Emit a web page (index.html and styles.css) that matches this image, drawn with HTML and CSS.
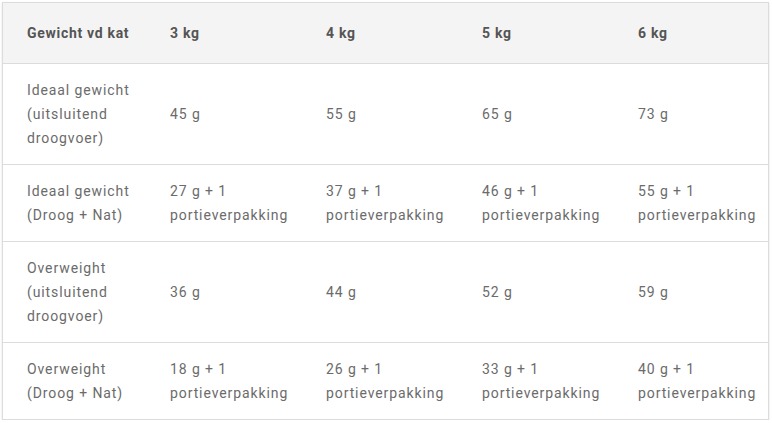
FILE: index.html
```html
<!DOCTYPE html>
<html lang="nl">
<head>
<meta charset="utf-8">
<link rel="stylesheet" href="styles.css">
</head>
<body>
<div class="wrap">
<table class="feed">
<colgroup><col class="c1"><col class="c2"><col class="c2"><col class="c2"><col></colgroup>
<thead>
<tr><th>Gewicht vd kat</th><th>3 kg</th><th>4 kg</th><th>5 kg</th><th>6 kg</th></tr>
</thead>
<tbody>
<tr><td>Ideaal gewicht<br>(uitsluitend<br>droogvoer)</td><td>45 g</td><td>55 g</td><td>65 g</td><td>73 g</td></tr>
<tr><td>Ideaal gewicht<br>(Droog + Nat)</td><td>27 g + 1<br>portieverpakking</td><td>37 g + 1<br>portieverpakking</td><td>46 g + 1<br>portieverpakking</td><td>55 g + 1<br>portieverpakking</td></tr>
<tr><td>Overweight<br>(uitsluitend<br>droogvoer)</td><td>36 g</td><td>44 g</td><td>52 g</td><td>59 g</td></tr>
<tr><td>Overweight<br>(Droog + Nat)</td><td>18 g + 1<br>portieverpakking</td><td>26 g + 1<br>portieverpakking</td><td>33 g + 1<br>portieverpakking</td><td>40 g + 1<br>portieverpakking</td></tr>
</tbody>
</table>
</div>
</body>
</html>
```
FILE: styles.css
```css
html, body { margin: 0; padding: 0; background: #fff; }
body { padding: 2px 0 0 2px; font-family: Roboto, "Noto Sans", sans-serif; }
.wrap {
  width: 765px;
  border: 1px solid #dcdcdc;
  box-shadow: 0 1px 2px rgba(0,0,0,0.12);
}
.feed {
  width: 100%;
  border-collapse: collapse;
  table-layout: fixed;
  color: #6b6b6b;
  font-size: 14px;
  line-height: 24px;
}
.c1 { width: 143px; }
.c2 { width: 156px; }
.feed th {
  background: #f4f4f4;
  text-align: left;
  font-weight: 700;
  color: #555;
  letter-spacing: 0.7px;
  padding: 18px 0 18px 24px;
  border-bottom: 1px solid #dcdcdc;
}
.feed td {
  padding: 14px 0 14px 24px;
  vertical-align: middle;
  border-bottom: 1px solid #dcdcdc;
  letter-spacing: 0.9px;
  white-space: nowrap;
}
.feed tbody tr:last-child td { border-bottom: none; }
```
